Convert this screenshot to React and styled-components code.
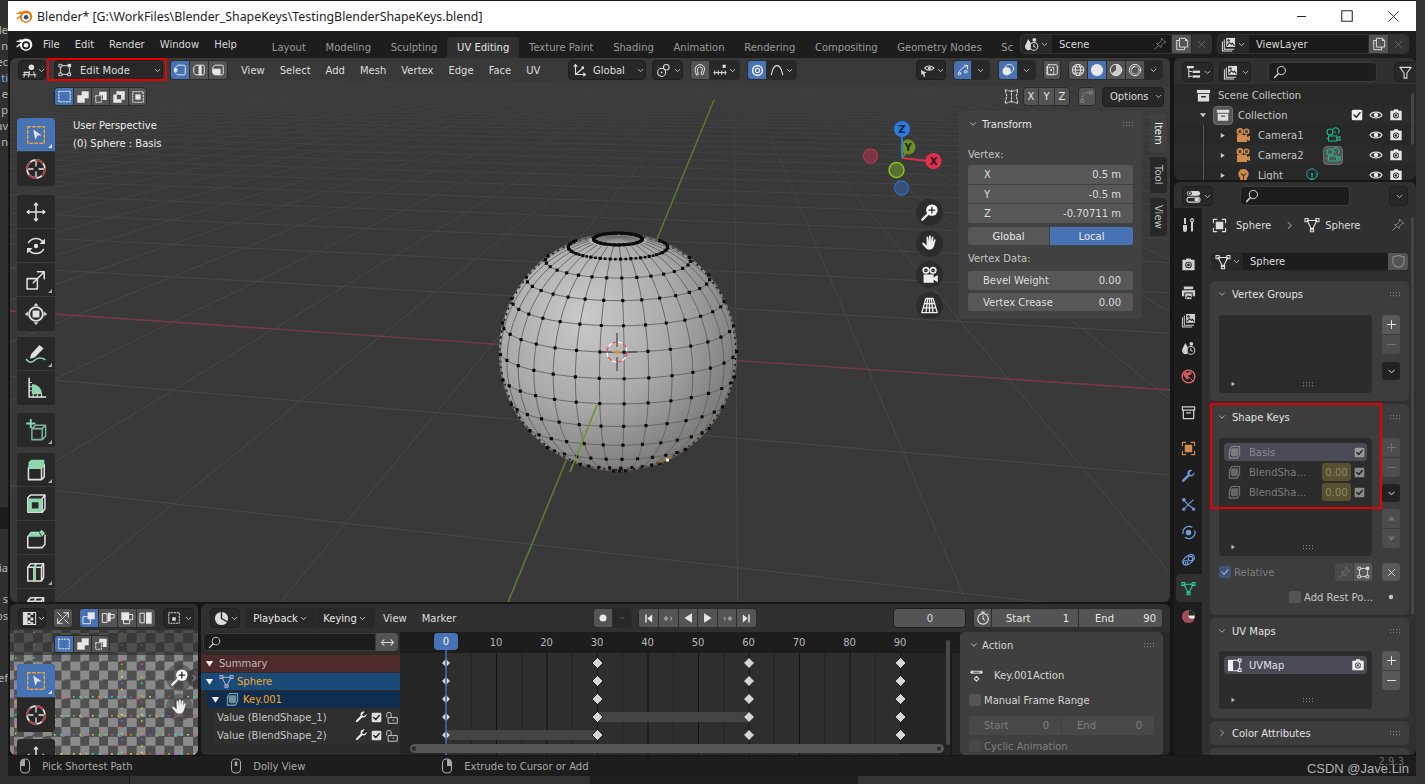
import React from 'react';
import styled, { createGlobalStyle } from 'styled-components';

const Global = createGlobalStyle`
  html, body { margin: 0; padding: 0; background: #2e2e2e; overflow: hidden; }
  * { box-sizing: border-box; }
`;

const UI = '"DejaVu Sans", "Liberation Sans", sans-serif';
const BLUE = '#4772b3';
const ORANGE = '#d28a4c';
const TEAL = '#20b596';

/* ---------- icons ---------- */
const Svg = styled.svg`
  width: ${p => p.$s}px;
  height: ${p => p.$hh || p.$s}px;
  flex: none;
  color: ${p => p.$c || 'inherit'};
  fill: none;
  stroke: currentColor;
  stroke-width: ${p => p.$sw || 1.1};
  stroke-linecap: round;
  stroke-linejoin: round;
  .f { fill: currentColor; stroke: none; }
  .m { fill: #8fd6ae; stroke: none; }
  .d { stroke-dasharray: 1.6 1.6; }
`;

const P = {
  chev: <path d="M4 6l4 4 4-4" strokeWidth="1.4" />,
  chevR: <path d="M6 3.5l4.5 4.5L6 12.5" strokeWidth="1.3" />,
  triD: <path className="f" d="M3.5 5h9L8 12z" />,
  triR: <path className="f" d="M5 3.5l7 4.5-7 4.5z" />,
  triU: <path className="f" d="M3 11l5-6.5 5 6.5z" />,
  triDn: <path className="f" d="M3 5l5 6.5L13 5z" />,
  plus: <path d="M8 3v10M3 8h10" strokeWidth="1.3" />,
  minus: <path d="M3 8h10" strokeWidth="1.3" />,
  x: <path d="M3.5 3.5l9 9M12.5 3.5l-9 9" strokeWidth="1.2" />,
  view3d: <g><circle className="f" cx="10" cy="4.5" r="3" /><path d="M1 12.5h14M3.5 9.5L2 15M8 9L7 15M12.5 9.5L14 15M2 10h6" /></g>,
  editmode: <g><path d="M5 3h5.5M3 5v6M13 6v5M5 13h6" /><rect x="1.5" y="1.5" width="3" height="3" /><rect className="f" x="11" y="1" width="4" height="4" /><rect x="1.5" y="11.5" width="3" height="3" /><rect x="11.5" y="11.5" width="3" height="3" /></g>,
  vert: <g><path d="M6 2.5h6.5a1.5 1.5 0 011.5 1.5v8a1.5 1.5 0 01-1.5 1.5H5L2.5 11V6z" /><rect className="f" x="1" y="6" width="4" height="4" /></g>,
  edge: <g><path d="M5 2.5h7.5a1.5 1.5 0 011.5 1.5v8a1.5 1.5 0 01-1.5 1.5H4L2 11V5.5z" /><rect className="f" x="7.5" y="3" width="3.5" height="11" /></g>,
  face: <g><path d="M5 2.5h7.5a1.5 1.5 0 011.5 1.5v8a1.5 1.5 0 01-1.5 1.5H4L2 11V5.5z" /><path className="f" d="M2 6.5h9v7H3.5L2 12z" /></g>,
  setNew: <rect className="d" x="2" y="2.5" width="12" height="11" />,
  setAdd: <g><rect className="f" x="6.5" y="1.5" width="8" height="8" /><rect className="f" x="1.5" y="6" width="8.5" height="8.5" /></g>,
  setSub: <g><path className="f" d="M6 2h8.5v9.5H10V6H6z" /><path className="d" d="M2 6.5h6.5V14H2z" /></g>,
  setXor: <path className="f" fillRule="evenodd" d="M5 1.5h9.5V11H11v3.5H1.5V5H5zM5.5 5.5v5h5v-5z" />,
  setAnd: <g><rect className="d" x="2" y="2" width="12" height="12" /><rect className="f" x="5" y="5" width="6" height="6" /></g>,
  global: <g><path d="M3.5 3v9.5H13M3.5 12.5L10 7" /><path d="M2 4.5L3.5 2.5 5 4.5M11.5 11l2 1.5-2 1.5" /><rect className="f" x="9.5" y="4.5" width="2.5" height="2.5" /></g>,
  pivot: <g><circle cx="6" cy="10" r="4.3" /><circle cx="11" cy="4.5" r="3" /><circle className="f" cx="6" cy="10" r="1" /></g>,
  magnet: <path d="M4 13.5L2.5 9a5.7 5.7 0 017.5-6.8 5 5 0 013 6.4l-1.8 4.9-2-1 1.5-4.3a2.6 2.6 0 00-1.5-3.4 3.2 3.2 0 00-4.2 3.6L6 12.5z" />,
  snapInc: <g><path d="M1 11h14M2 9v4M6 9v4M10 9v4M14 9v4" /><rect className="f" x="11" y="2" width="3.5" height="3.5" /></g>,
  prop: <g><circle cx="8" cy="8" r="6" strokeWidth="2" /><circle cx="8" cy="8" r="2.6" strokeWidth="1.5" /></g>,
  falloff: <path d="M1.5 13.5C3 5 5.5 3 8 3s5 2 6.5 10.5" strokeWidth="1.2" />,
  overlayEye: <g><path d="M5 5.5C7 2.5 12 2.5 15 5.5 12 8.5 7 8.5 5 5.5z" /><circle className="f" cx="10" cy="5.5" r="1.6" /><path className="f" d="M1 7.5l6 2.8-2.4.8 1 3.4-1.5.5-1-3.4-1.6 1z" /></g>,
  gizmoArrow: <g><path d="M2.5 13C4 8 8 4 13 3M9.5 2.5L13.5 3 13 7" /><circle cx="4" cy="12" r="1.5" /><circle cx="11" cy="10" r="1.5" /></g>,
  overlay: <g><circle cx="9.5" cy="6.5" r="5" /><circle className="f" cx="6.5" cy="9.5" r="4.7" /></g>,
  xray: <g><rect x="3" y="2" width="11" height="11" rx="1" /><rect className="d" x="2" y="5" width="8" height="8.5" /><rect className="f" x="6" y="7" width="2" height="2" /></g>,
  wire: <g><circle cx="8" cy="8" r="6.5" /><ellipse cx="8" cy="8" rx="3" ry="6.5" /><path d="M1.5 8h13M2.5 4.5h11M2.5 11.5h11" /></g>,
  solid: <circle className="f" cx="8" cy="8" r="7" />,
  matBall: <g><circle cx="8" cy="8" r="6.5" /><path className="f" d="M8 8V1.5a6.5 6.5 0 016.5 6.5 6.5 6.5 0 01-6.5 6.5A6.5 6.5 0 012.8 12z" opacity=".8" /></g>,
  rendBall: <g><circle cx="8" cy="8" r="6.5" /><circle cx="8" cy="8" r="4.5" opacity=".6" /><path d="M4.5 7a4 4 0 013-3" /></g>,
  mirror: <path className="d" d="M7 3L2 1.5 3.5 7.5 2 14.5 7 13M9 3l5-1.5L12.5 7.5 14 14.5 9 13M8 2v12" />,
  autoProp: <g><path className="d" d="M3 11a6.5 6.5 0 018-8" /><rect x="1.5" y="11" width="3" height="3" /><rect x="11" y="1.5" width="3" height="3" /></g>,
  cursor: <g><circle cx="8" cy="8" r="6" strokeWidth="1.2" /><circle cx="8" cy="8" r="6" strokeWidth="1.2" stroke="#b03a3a" strokeDasharray="4.7 4.7" /><path d="M8 3v3M8 10v3M3 8h3M10 8h3" strokeWidth=".9" /></g>,
  select: <g><rect x="2" y="2" width="12" height="12" stroke="#e8a33d" strokeDasharray="2 1.6" /><path className="f" d="M6 4l6 4.2-2.8.2-1.8 3z" /></g>,
  move: <g><path d="M8 2v12M2 8h12" /><path className="f" d="M8 .8L10 3.2H6zM8 15.2L6 12.8h4zM.8 8L3.2 6v4zM15.2 8L12.8 10V6z" /></g>,
  rotate: <g><path d="M2.5 5.5A6.5 6.5 0 0113.5 5.5M13.5 10.5A6.5 6.5 0 012.5 10.5" /><path className="f" d="M14.5 2.5v4h-4zM1.5 13.5v-4h4z" /><circle className="f" cx="8" cy="8" r="1.6" /></g>,
  scale: <g><rect x="1.5" y="7" width="7.5" height="7.5" /><path d="M6 10l7.5-7.5M9 2h5v5" /></g>,
  transform: <g><circle cx="8" cy="8" r="5" strokeWidth="1.4" /><rect className="f" x="5.5" y="5.5" width="5" height="5" /><path className="f" d="M8 0l1.8 2H6.2zM8 16l-1.8-2h3.6zM0 8l2-1.8v3.6zM16 8l-2 1.8V6.2z" /></g>,
  annotate: <g><path d="M10.5 1.5l3 2.5-6.5 6.5-3.5 1 1-3.5z" className="f" /><path d="M1 12c2 3 4.5 2 6 .5s4-2.5 7.5-.5" stroke="#8fd6ae" strokeWidth="1.1" /></g>,
  measure: <g><path d="M3 1v13.5h12" /><path d="M3 4h1.5M3 7h1.5M3 10h1.5M6 14.5V13M9 14.5V13M12 14.5V13" strokeWidth=".8" /><path className="m" d="M5 12.5V5a7.5 7.5 0 017.5 7.5z" /></g>,
  addCube: <g><path className="m" d="M3.5 0h1.4v2.6h2.6v1.4H4.9v2.6H3.5V4H.9V2.6h2.6z" /><path d="M5 7l2.5-2.5h7.5v8L12.5 15H5zM5 7h7.5v8M12.5 7L15 4.5" stroke="#7cb497" /></g>,
  extrude: <g><path d="M2.5 6.5l2-2.5H14v9l-2 2H2.5zM12 6.5V15M12 6.5L14 4" /><path className="m" d="M2.5 2.5l2-2H14v4.5L12 7.3H2.5z" /></g>,
  inset: <g><path d="M2 3.5l2-2h10.5v10l-2 2.5H2z M12.5 4v10M12.5 4l2-2.5" /><path className="m" d="M2 4h10.5v10H2zM5 6.7v4.6h4.8V6.7z" fillRule="evenodd" /></g>,
  bevel: <g><path d="M2 7l2.5-3H10M2 7v8h10.5l2-2.5V6" /><path className="m" d="M2 7l2.5-3H10l2 3zM10.5 3.5l1.7-1.5 2.3 2.3L12.5 7z" /></g>,
  loopcut: <g><path d="M2 4.5l2-2.5H13.5v10L12 14.5H2z M6.5 4.5L8.5 2M12 4.5L13.5 2M2 4.5H12v10M6.5 4.5v10" /><path d="M7.3 3.5v11" stroke="#8fd6ae" strokeWidth="1.4" /></g>,
  zoomPlus: <g><circle cx="10" cy="6" r="4.8" fill="#fff" stroke="none" /><path d="M10 3.6v4.8M7.6 6h4.8" stroke="#222" /><path d="M6.5 9.5L2 14" strokeWidth="2" /></g>,
  hand: <path className="f" d="M5.5 2.8c0-1 1.4-1 1.5 0l.3 3.7.3-4.7c.1-1 1.5-1 1.5 0l.1 4.7.6-3.8c.2-1 1.5-.8 1.5.2l-.4 4.2.9-2.2c.4-.9 1.6-.5 1.3.5l-1.3 4.8c-.5 2-1.9 3-3.8 3-1.7 0-2.8-.7-3.7-2.1L2 8.6c-.6-.9.5-1.7 1.3-1l2.3 2z" />,
  camNav: <g><circle className="f" cx="5" cy="4.5" r="3" /><circle className="f" cx="11" cy="4.5" r="3" /><path className="f" d="M3 8h8.5v2.5L15 8.5v6l-3.5-2V15H3z" /><circle cx="5" cy="4.5" r="1" stroke="#222" /><circle cx="11" cy="4.5" r="1" stroke="#222" /></g>,
  gridNav: <path d="M5 2h6l3.5 12h-13zM8 2v12M3.6 6.5h8.8M2.5 10h11M6.5 2L5 14M9.5 2L11 14" />,
  tree: <g><path d="M3 2h5M3 2v11M3 7h3M3 12h3" /><rect className="f" x="1" y="1" width="7" height="2.5" /><rect className="f" x="7" y="6" width="8" height="2.5" /><rect className="f" x="7" y="11" width="8" height="2.5" /></g>,
  layers: <g><path d="M1.5 5v10h10M3.5 3v10h10" /><rect className="f" x="5.5" y="1" width="9.5" height="9.5" /><path d="M6.5 9l2.5-3 2 2 1-1.5 2 2.5" stroke="#222" /><circle cx="8" cy="3.8" r=".8" stroke="#222" /></g>,
  uvEditor: <g><rect x="1.5" y="1.5" width="13" height="13" /><path className="f" d="M1.5 1.5H6v13H1.5z" /><path className="f" d="M6 4h3v3H6zM9 7h3v3H9zM6 10h3v3H6zM9 1.5h3V4H9zM9 12h3v2.5H9z" /></g>,
  search: <g><circle cx="9.7" cy="6.3" r="4.7" /><path d="M6.3 9.7L1.8 14.2" strokeWidth="1.6" /></g>,
  filter: <path d="M2 2.5h12L9.5 8.5v5.5h-3V8.5z" strokeWidth="1.2" />,
  box: <g><rect className="f" x="1" y="2" width="14" height="3.5" /><path className="f" fillRule="evenodd" d="M2 6.5h12v8H2zM5.5 8.5V10h5V8.5z" /></g>,
  camOb: <g><circle className="f" cx="5" cy="4.5" r="3.5" /><circle className="f" cx="11.5" cy="4.5" r="3" /><path className="f" d="M2 8h10v2l3-1v5l-3-1v2H2z" /><circle cx="5" cy="4.5" r="1" stroke="#333" /><circle cx="11.5" cy="4.5" r="1" stroke="#333" /></g>,
  camData: <g><circle cx="5" cy="5" r="3" /><path d="M7.5 4a3.3 3.3 0 116 2" /><rect x="3.5" y="9" width="8.5" height="5" /><path d="M12 11l3-1.5v4L12 12.5M2 11.5h1.5" /><circle className="f" cx="10" cy="5" r=".8" /></g>,
  lightOb: <g><path className="f" d="M8 1a5.5 5.5 0 00-3.5 9.7V13h7v-2.3A5.5 5.5 0 008 1z" /><path className="f" d="M5.5 14h5v1.5h-5z" /><path d="M5.5 6L7 7.5M10.5 6L9 7.5M8 7.5V13" stroke="#333" /></g>,
  lightData: <g><circle cx="8" cy="7" r="6" /><path d="M8 8.5V13M6.5 13.5h3" /><circle className="f" cx="8" cy="7" r="1.2" /></g>,
  eye: <g><path d="M1 8c3-4.5 11-4.5 14 0-3 4.5-11 4.5-14 0z" strokeWidth="1.3" /><circle className="f" cx="8" cy="8" r="2.6" /></g>,
  render: <g><path className="f" fillRule="evenodd" d="M5 3l1-1.5h4L11 3h3.5v11h-13V3zM8 5a3.5 3.5 0 100 7 3.5 3.5 0 000-7z" /><circle cx="8" cy="8.5" r="2" /></g>,
  check: <g><rect className="f" x="1" y="1" width="14" height="14" rx="2" /><path d="M4 8l3 3 5-6" stroke="#222" strokeWidth="2" /></g>,
  checkMark: <path d="M3 8l3.5 3.5L13 4.5" strokeWidth="2.2" />,
  toggles: <g><rect className="f" x="1" y="2" width="14" height="5.3" rx="2.6" /><rect x="1" y="8.7" width="14" height="5.3" rx="2.6" /><rect className="f" x="9" y="9.7" width="5" height="3.3" rx="1.6" /><circle cx="4" cy="4.7" r="1.7" stroke="#222" /></g>,
  tools: <g><path className="f" d="M3 8h4v5a2 2 0 01-4 0zM4 1h2v6H4z" /><path d="M12 1.5c-2 1-2 3 0 3.5 2-.5 2-2.5 0-3.5z" strokeWidth="1.2" /><path className="f" d="M11 5h2v9.5h-2z" /></g>,
  printer: <g><path className="f" d="M3 1.5h10v3H3zM1 5.5h14V12h-2.5V8h-9v4H1z" /><path className="f" d="M4.5 9h7v6h-7z" /><path d="M5.5 14l2-2.5L9 13l1-1 1 2" stroke="#222" /></g>,
  scene: <g><path className="f" d="M4.5 2L1 9.5C1 12.5 3 14 5 14c1 0 1.5-.5 2-1V6z" /><circle cx="10.5" cy="10" r="4.2" /><path d="M10.5 8v2l1.5 1" /><circle className="f" cx="11" cy="3" r="2" /></g>,
  world: <g><circle cx="8" cy="8" r="6.8" stroke="#e06b6b" strokeWidth="1.4" /><path d="M3 3.5L13 13" stroke="#e06b6b" strokeWidth="1" /><path d="M4.5 2.8l3 1.5 1-1.8L12 4 10 6.500l-3 .5 1.5 3-2 1.500-4-4.500z" stroke="none" fill="#d05a5a" /></g>,
  boxLine: <g><path d="M1.5 2h13v3.5h-13zM2.5 5.5v9h11v-9M6 8.5h4" strokeWidth="1.3" /></g>,
  object: <g><path d="M1.5 5V1.5H5M11 1.5h3.5V5M14.5 11v3.5H11M5 14.5H1.5V11" strokeWidth="1.2" /><rect className="f" x="4" y="4" width="8" height="8" /></g>,
  wrench: <path className="f" d="M14.5 3.5l-3 3-2-.5-.5-2 3-3C9.5.2 7 1.5 6.8 4c0 .7 0 1.2.3 1.8L1.5 11.4c-1.3 1.3.6 3.2 1.9 1.9l5.6-5.6c2.6 1 5.6-.7 5.500-4.200z" />,
  particles: <g><path d="M3 3l4.5 5.5M3 13l4.5-4.5M14 13L8 8.500M7.500 8.500L13 3" strokeWidth="1.2" /><circle className="f" cx="3" cy="3" r="2" /><circle className="f" cx="3" cy="13" r="1.7" /><circle className="f" cx="13.5" cy="13" r="1.7" /></g>,
  physics: <g><circle cx="8.5" cy="8" r="6.5" strokeWidth="1.4" strokeDasharray="14 5" /><circle className="f" cx="8" cy="8" r="3" /></g>,
  constraint: <g><path d="M2.5 11.5C1 9.5 2.5 6 5.5 4S12 1 13.5 3s0 5-3 7.5-6.5 3-8 1z" strokeWidth="1.3" /><circle cx="5" cy="10.5" r="2.4" /><circle className="f" cx="5" cy="10.5" r="1" /><circle cx="10" cy="6" r="2.4" /></g>,
  mesh: <g><path d="M3 3.5h10M3 3.5L8 13M13 3.5L8 13" /><rect x="1" y="1.5" width="3.2" height="3.2" /><rect x="11.8" y="1.5" width="3.2" height="3.2" /><rect x="6.4" y="11.5" width="3.2" height="3.2" /></g>,
  material: <g><circle cx="8" cy="8" r="7" fill="#a24c55" stroke="none" /><path d="M8 8c1 3 5 3 6.5 1A7 7 0 008 1z" fill="#ececec" stroke="none" /><path d="M8 1a7 7 0 016.9 6H8z" fill="#24242a" stroke="none" /></g>,
  pin: <g><path d="M10 1.5L14.5 6l-2 .5-3 3-.2 2.5L4 7.5l2.500-.2 3-3z" /><path d="M6 10l-4 4" /></g>,
  shield: <path d="M8 1.5l6 1.8v4.2c0 3.5-2.5 6-6 7-3.500-1-6-3.500-6-7V3.300z" strokeWidth="1.1" />,
  copy: <g><path d="M2 4h3M2 4v10.500h9V12" /><path d="M5.500 1.500H12L14.500 4v7.500h-9z" /><path className="f" d="M11.500 1.500v3h3z" /></g>,
  shapeKey: <g><path d="M5 1.500h8.500v8L11 14H2.500V6z" /><path className="f" d="M5.500 3.500H12V10l-1.500 2h-5L4 10.500v-5z" opacity=".8" /></g>,
  uvmap: <g><path className="f" d="M1 2h5.500v12H1z" /><path d="M6.500 2.500h6M13.500 4.500v7M7 13.500h5" /><rect x="12" y="1" width="3" height="3" /><rect x="12" y="11.5" width="3" height="3" /></g>,
  clock: <g><path className="f" d="M6 .5h4V2H6z" /><circle cx="8" cy="9" r="6" strokeWidth="1.3" /><path d="M8 9V5.500M8 9l2 1.500M13 3l1 1" /></g>,
  ballTime: <g><circle className="f" cx="8" cy="8" r="7" /><path d="M8 8V1.500M8 8l5.500 3" stroke="#2a2a2a" strokeWidth="1.5" /></g>,
  sync: <g><path d="M2 14L14 2M9 2h5v5M7 14H2V9" /><path d="M6 6L2 2M10 10l4 4" /></g>,
  uvSel1: <g><rect x="1.5" y="6.5" width="8" height="8" /><rect x="6.5" y="1.5" width="8" height="8" className="f" /></g>,
  uvSel2: <g><path d="M2 3h5v10H2z" /><path className="f" d="M8 2h3v10H8z" /><path d="M11 4h4v4h-4" /></g>,
  uvSel3: <g><rect className="f" x="1.5" y="1.5" width="9" height="9" /><path d="M10.500 4h4v6h-4M4 10.500v4h7V11" /></g>,
  uvSel4: <g><rect x="1.5" y="2.5" width="4.5" height="11" /><rect className="f" x="8" y="1.5" width="6.5" height="13" /></g>,
  snapCube: <g><rect className="d" x="2" y="2" width="12" height="12" /><path className="f" d="M6 7h4v4H6z" /></g>,
  action: <g><path className="f" d="M1 4.500l2-2 2 2-2 2zM11 4.500l2-2 2 2-2 2z" /><path d="M4 3.500h8v2H4" strokeWidth="1" /><path d="M8 9l2.500 2.500L8 14l-2.500-2.500z" /></g>,
  mouseL: <g><rect x="3.5" y="1" width="9" height="14" rx="4" /><path className="f" d="M8 1.200a3.800 3.800 0 00-4.200 4V8H8z" /></g>,
  mouseM: <g><rect x="3.5" y="1" width="9" height="14" rx="4" /><path className="f" d="M6.700 3.500h2.600V8H6.700z" /></g>,
  mouseR: <g><rect x="3.5" y="1" width="9" height="14" rx="4" /><path className="f" d="M8 1.200a3.800 3.800 0 014.200 4V8H8z" /></g>,
  swap: <path d="M1.500 8h13M4.500 5l-3 3 3 3M11.500 5l3 3-3 3" />,
  tRec: <circle className="f" cx="8" cy="8" r="4" />,
  tStart: <path className="f" d="M4 3h1.800v10H4zM6.500 8l6-5v10z" />,
  tPrevK: <path className="f" d="M5 4.500L8 8l-3 3.500L2 8zM10.500 4.500L13 8l-2.500 3.500V8z" />,
  tBack: <path className="f" d="M12.500 2.500v11L4 8z" />,
  tPlay: <path className="f" d="M3.500 2.500v11L12 8z" />,
  tNextK: <path className="f" d="M5.500 4.500L3 8l2.500 3.500V8zM11 4.500L14 8l-3 3.500L8 8z" />,
  tEnd: <path className="f" d="M12 3h-1.800v10H12zM9.500 8l-6-5v10z" />,
  lock: <g><path d="M2 7V4a2.500 2.500 0 015 0v3" /><rect x="4" y="7.5" width="10" height="6.5" /><path d="M9 10.500h1" /></g>,
};

const Icon = ({ n, s = 14, c, sw }) => (
  <Svg viewBox="0 0 16 16" $s={s} $c={c} $sw={sw}>{P[n]}</Svg>
);

const Dots = () => (
  <Svg viewBox="0 0 12 6" $s={12} $hh={6} $c="#8e8e8e">
    {[1, 4, 7, 10].map(x => [1.2, 4.2].map(y => <rect key={x + '-' + y} className="f" x={x} y={y} width="1" height="1" />))}
  </Svg>
);

const Logo = ({ body = '#f0f0f0', dot = '#f0f0f0', s = 16 }) => (
  <svg width={s} height={s} viewBox="0 0 16 16">
    <path fill={body} fillRule="evenodd" d="M1 5.700h4.300L.6 9.600c-.6.5 0 1.500.8 1l2.300-1.800c.1 3 2.700 5.200 5.700 5.200a6 6 0 006-5.700 5.900 5.900 0 00-6-6c-1.100 0-2.200.3-3 .9H3.700c-1.100 0-1 1.100 0 1.100h1L1 4.500c-.9 0-.9 1.200 0 1.200zM9.500 5a3.800 3.800 0 110 7.600 3.800 3.800 0 010-7.600z" />
    <circle cx="9.5" cy="8.7" r="2.2" fill={dot} />
  </svg>
);

/* ---------- page frame ---------- */
const Page = styled.div`
  width: 1425px; height: 784px; overflow: hidden;
  display: grid; grid-template-columns: 8px 1408px 9px;
  font-family: ${UI}; font-size: 10px; color: #d4d4d4;
`;
const SideStrip = styled.div`
  background: ${p => p.$bg}; overflow: hidden;
  display: flex; flex-direction: column;
`;
const StripText = styled.div`
  height: ${p => p.$h || 16}px; flex: none; display: flex; justify-content: flex-end; align-items: center;
  font: 11px "Noto Sans", sans-serif; color: ${p => p.$c || '#b5b5b5'}; white-space: nowrap;
  background: ${p => p.$bg || 'transparent'};
`;
const Window = styled.div`display: flex; flex-direction: column; height: 784px; background: #161616;`;
const TitleBar = styled.div`
  margin-top: 1px; height: 30px; flex: none; background: #fff; color: #1c1c1c;
  display: flex; align-items: center; padding-left: 8px;
  font: 12.37px "Noto Sans", "Noto Sans CJK SC", sans-serif;
`;
const TitleText = styled.span`margin-left: 4px; flex: 1; white-space: nowrap;`;
const WinBtn = styled.div`width: 46px; display: flex; justify-content: center;`;

const TopBar = styled.div`height: 27px; flex: none; background: #1d1d1d; display: flex; align-items: flex-start; padding: 0 7px 0 8px;`;
const LogoCell = styled.div`width: 26px; height: 26px; display: flex; align-items: center;`;
const TopMenu = styled.div`display: flex; gap: 15px; height: 26px; align-items: center; margin-left: 1px; width: 219px; flex: none; color: #d8d8d8;`;
const Tabs = styled.div`display: flex; flex: 1; overflow: hidden; height: 27px;`;
const Tab = styled.div`
  margin-top: 6px; height: 21px; padding: 0 9.85px; display: flex; align-items: center;
  white-space: nowrap; color: ${p => p.$on ? '#e4e4e4' : '#9a9a9a'};
  background: ${p => p.$on ? '#303030' : 'transparent'}; border-radius: 4px 4px 0 0;
`;
const IdBlock = styled.div`
  margin-top: 3px; margin-left: ${p => p.$ml || 0}px; width: ${p => p.$w}px; height: 20px; flex: none;
  display: flex; align-items: stretch; background: #1a1a1a; border: 1px solid #333; border-radius: 4px; overflow: hidden;
`;
const IdIcon = styled.div`width: ${p => p.$w}px; background: #282828; display: flex; align-items: center; justify-content: center; gap: 1px; flex: none;`;
const IdName = styled.div`flex: 1; padding-left: 7px; display: flex; align-items: center; justify-content: space-between; padding-right: 4px; color: #d8d8d8;`;
const IdBtn = styled.div`width: 20px; flex: none; background: ${p => p.$dim ? '#333' : '#545454'}; display: flex; align-items: center; justify-content: center; color: ${p => p.$dim ? '#707070' : '#ddd'}; border-left: 1px solid #2a2a2a;`;

const Main = styled.div`
  height: 698px; flex: none; display: grid; grid-template-columns: 1160px 242px; column-gap: 4px; padding-left: 2px;
`;
const LeftCol = styled.div`display: grid; grid-template-rows: 544px 151px; row-gap: 2px;`;
const RightCol = styled.div`display: grid; grid-template-rows: 122px 573px; row-gap: 2px;`;

/* ---------- shared controls ---------- */
const Row = styled.div`
  display: flex; align-items: center; height: ${p => p.$h || 20}px; flex: none;
  margin-top: ${p => p.$mt || 0}px; padding: 0 ${p => p.$pr || 0}px 0 ${p => p.$pl || 0}px;
`;
const Drop = styled.div`
  width: ${p => p.$w}px; height: 20px; flex: none; margin-left: ${p => p.$ml || 0}px;
  background: ${p => p.$bg || '#282828'}; border: 1px solid #1e1e1e; border-radius: 4px;
  display: flex; align-items: center; justify-content: ${p => p.$j || 'space-between'}; padding: 0 0 0 ${p => p.$pl || 3}px;
  color: #dcdcdc; white-space: nowrap;
`;
const DropLabel = styled.span`flex: 1; margin-left: ${p => p.$ml}px;`;
const Seg = styled.div`
  display: flex; flex: none; height: ${p => p.$h || 20}px; margin-left: ${p => p.$ml || 0}px; border-radius: 4px; overflow: hidden; gap: 1px;
  background: #2e2e2e; border: 1px solid #2b2b2b;
`;
const SegBtn = styled.div`
  width: ${p => p.$w}px; display: flex; align-items: center; justify-content: center; gap: 1px;
  background: ${p => p.$on ? BLUE : p.$dark ? '#282828' : '#545454'}; color: #e8e8e8; flex: none;
`;
const Split = styled(SegBtn)`justify-content: space-between; padding: 0 ${p => p.$pr}px 0 ${p => p.$pl}px;`;
const Menus = styled.div`display: flex; gap: 15px; width: ${p => p.$w}px; margin-left: ${p => p.$ml}px; flex: none; color: #dcdcdc;`;
const Push = styled.div`flex: 1;`;

/* ---------- viewport ---------- */
const Viewport = styled.section`position: relative; background: #393939; border-radius: 6px; overflow: hidden; display: flex; flex-direction: column;`;
const Scene3D = styled.svg`position: absolute; inset: 0; width: 100%; height: 100%;`;
const HeaderLayer = styled.div`position: relative; display: flex; flex-direction: column; padding-top: 2px;`;
const VBody = styled.div`position: relative; flex: 1; min-height: 0; display: flex; align-items: flex-start; margin-top: 5px; padding: 0 3px 0 7px; overflow: hidden;`;
const ToolBar = styled.div`position: relative; display: flex; flex-direction: column; padding-top: ${p => p.$top ?? 7}px; width: 38px; flex: none;`;
const ToolGroup = styled.div`display: flex; flex-direction: column; background: #282828; border-radius: 4px; overflow: hidden; margin-bottom: ${p => p.$mb}px; flex: none;`;
const Tool = styled.div`
  height: 34px; flex: none; display: flex; align-items: center; justify-content: center; position: relative;
  background: ${p => p.$on ? BLUE : '#282828'}; color: #e0e0e0; border-bottom: 1px solid #3a3a3a;
  &:last-child { border-bottom: 0; }
`;
const Corner = styled.i`
  position: absolute; right: 3px; bottom: 3px; width: 0; height: 0;
  border-left: 4px solid transparent; border-bottom: 4px solid ${p => p.$c || '#bbb'};
`;
const Info = styled.div`margin-left: 18px; padding-top: 6px; color: #ececec; line-height: 18px; white-space: nowrap;`;
const NavCol = styled.div`margin-left: auto; margin-top: 88px; display: flex; flex-direction: column; gap: 4px; flex: none;`;
const NavBtn = styled.div`
  width: 27px; height: 27px; border-radius: 50%; background: #2c2c2c; display: flex; align-items: center; justify-content: center; color: #eee;
`;
const NPanel = styled.div`
  margin-left: 16px; width: 183px; flex: none; background: #414141; border-radius: 5px; padding: 0 9px 8px; color: #d6d6d6; display: flex; flex-direction: column;
`;
const PanelHead = styled.div`
  height: 26px; flex: none; display: flex; align-items: center; gap: 4px; color: #e6e6e6;
`;
const Lbl = styled.div`height: 16px; flex: none; margin-top: ${p => p.$mt || 0}px; display: flex; align-items: center; color: #c4c4c4;`;
const FieldStack = styled.div`display: flex; flex-direction: column; gap: ${p => p.$gap ?? 1}px; margin-top: ${p => p.$mt || 0}px; flex: none;`;
const Field = styled.div`
  height: ${p => p.$h || 18.7}px; background: #575757; display: flex; justify-content: space-between; align-items: center; padding: 0 12px 0 ${p => p.$pl || 15}px;
  color: #dedede; border-radius: ${p => p.$r || 0}px; flex: none;
  &:first-child { border-top-left-radius: 3px; border-top-right-radius: 3px; }
  &:last-child { border-bottom-left-radius: 3px; border-bottom-right-radius: 3px; }
`;
const Toggle2 = styled.div`display: grid; grid-template-columns: 81px 1fr; gap: 1px; height: 18px; margin-top: 4px; flex: none; border-radius: 3px; overflow: hidden;`;
const ToggleCell = styled.div`display: flex; align-items: center; justify-content: center; background: ${p => p.$on ? BLUE : '#575757'}; color: #e8e8e8;`;
const SideTabs = styled.div`margin-left: 8px; margin-top: 3px; display: flex; flex-direction: column; gap: 5px; flex: none;`;
const SideTab = styled.div`
  width: 17px; height: ${p => p.$h}px; background: ${p => p.$on ? '#414141' : '#282828'}; border-radius: 0 4px 4px 0;
  display: flex; align-items: center; justify-content: center; color: ${p => p.$on ? '#eee' : '#bdbdbd'};
  writing-mode: vertical-rl; white-space: nowrap;
`;

/* ---------- bottom editors ---------- */
const BottomRow = styled.div`display: grid; grid-template-columns: 188px 969px; column-gap: 3px; min-height: 0;`;
const Editor = styled.section`position: relative; background: ${p => p.$bg || '#303030'}; border-radius: 6px; overflow: hidden; display: flex; flex-direction: column; min-height: 0;`;
const EditorHead = styled.div`height: ${p => p.$h}px; flex: none; background: #303030; display: flex; align-items: center; padding: 2px 0 ${p => p.$h - 26}px ${p => p.$pl}px; position: relative;`;
const Checker = styled.div`
  position: relative; flex: 1; min-height: 0; overflow: hidden;
  background-color: #505050;
  background-image: conic-gradient(#8a8a8a 25%, #505050 0 50%, #8a8a8a 0 75%, #505050 0);
  background-size: 18.8px 18.8px; background-position: 4px 3px;
  display: flex; align-items: flex-start; padding-left: 7px;
`;
const UVDots = styled.svg`position: absolute; inset: 0; width: 100%; height: 100%;`;
const UVBand = styled.div`position: absolute; left: 0; right: 0; top: 0; height: 25px; background: rgba(44,44,44,.62);`;
const UVSeg = styled(Seg)`position: absolute; left: 44px; top: 5px; height: 18px;`;
const UVNav = styled.div`position: relative; margin-left: 111px; margin-top: 34px; display: flex; flex-direction: column; gap: 3px;`;
const UVNavBtn = styled(NavBtn)`background: rgba(70,70,70,.55);`;
const UVArrow = styled.div`position: absolute; right: -3px; top: 38px; width: 14px; height: 20px; background: rgba(60,60,60,.8); border-radius: 10px 0 0 10px; color: #bbb; display: flex; align-items: center; justify-content: center;`;

const SheetBody = styled.div`flex: 1; min-height: 0; display: flex;`;
const Channels = styled.div`width: 199px; flex: none; background: #2c2c2c; display: flex; flex-direction: column; padding-top: 1px;`;
const ChSearch = styled.div`display: flex; height: 18px; margin: 0 2px 4px; flex: none;`;
const ChInput = styled.div`flex: 1; background: #1d1d1d; border: 1px solid #3a3a3a; border-radius: 4px 0 0 4px; display: flex; align-items: center; padding-left: 4px; color: #cfcfcf;`;
const ChSwap = styled.div`width: 22px; background: #545454; border-radius: 0 4px 4px 0; display: flex; align-items: center; justify-content: center; color: #ddd;`;
const ChRow = styled.div`
  height: 17px; margin-bottom: 1px; flex: none; margin-left: ${p => p.$ml || 0}px; background: ${p => p.$bg}; color: ${p => p.$c || '#cdcdcd'};
  display: flex; align-items: center; gap: 3px; padding-left: ${p => p.$pl || 3}px; white-space: nowrap; padding-right: 1px;
`;
const ChDim = styled.span`color: #bbb;`;
const ChSpacer = styled.span`flex: 1;`;
const Timeline = styled.svg`width: 560px; height: 123px; flex: none; display: block;`;
const ActionPanel = styled.div`
  width: 203px; height: 123px; flex: none; background: #3f3f3f; border-radius: 5px; padding: 0 9px; overflow: hidden; color: #d4d4d4; display: flex; flex-direction: column;
`;
const ActionWrap = styled.div`flex: 1; background: #282828; display: flex;`;
const ActionRow = styled.div`display: flex; align-items: center; gap: ${p => p.$gap || 3}px; height: ${p => p.$h}px; margin-top: ${p => p.$mt || 0}px; flex: none; color: ${p => p.$c || '#d4d4d4'};`;
const Box = styled.span`
  width: 12px; height: 12px; flex: none; border-radius: 2px; background: ${p => p.$bg || '#545454'}; display: inline-flex; align-items: center; justify-content: center; color: #ddd;
`;
const RangeGrp = styled.div`height: 19px; margin-top: 8px; width: 185px; flex: none; display: grid; grid-template-columns: 92px 1fr; gap: 1px; border-radius: 3px; overflow: hidden; color: #7e7e7e;`;
const RangeCell = styled.div`background: #484848; display: flex; justify-content: space-between; align-items: center; padding: 0 12px 0 15px;`;

/* ---------- outliner ---------- */
const Outliner = styled.section`position: relative; background: #282828; border-radius: 6px; overflow: hidden; display: flex; flex-direction: column;`;
const OutHead = styled.div`height: 26px; flex: none; background: #303030; display: flex; align-items: center; padding: 2px 0 0 8px;`;
const SearchBox = styled.div`
  width: ${p => p.$w}px; height: 20px; margin-left: ${p => p.$ml}px; flex: none; background: #1d1d1d; border: 1px solid #3a3a3a; border-radius: 4px; display: flex; align-items: center; padding-left: 4px; color: #ddd;
`;
const OutRows = styled.div`padding-top: 1px; display: flex; flex-direction: column;`;
const OutRow = styled.div`
  height: 20px; flex: none; display: flex; align-items: center; position: relative; padding-left: ${p => p.$pl}px; padding-right: 13px; color: ${p => p.$c || '#c4c4c4'};
  background: ${p => p.$alt ? '#2b2b2b' : 'transparent'};
`;
const Tri = styled.span`width: 15px; flex: none; display: flex; color: #c8c8c8;`;
const IconPad = styled.span`
  width: 20px; height: 19px; flex: none; display: flex; align-items: center; justify-content: center; border-radius: 4px;
  background: ${p => p.$on ? '#555' : 'transparent'}; border: ${p => p.$on ? '1px solid #6d6d6d' : '0'};
`;
const OutName = styled.span`width: ${p => p.$w}px; flex: none; margin-left: 5px; white-space: nowrap;`;
const OutCols = styled.span`margin-left: auto; display: flex; gap: 6px; align-items: center; color: #e6e6e6;`;
const TreeLine = styled.i`position: absolute; left: 29px; top: 0; bottom: 0; width: 1px; background: #555;`;
const ScrollThumb = styled.i`position: absolute; right: 2px; top: ${p => p.$t}px; height: ${p => p.$h}px; width: 3px; border-radius: 2px; background: #444;`;

/* ---------- properties ---------- */
const Props = styled.section`position: relative; background: #303030; border-radius: 6px; overflow: hidden; display: flex; flex-direction: column;`;
const PropHead = styled.div`height: 26px; flex: none; display: flex; align-items: center; padding: 2px 8px 0 8px;`;
const PropBody = styled.div`flex: 1; min-height: 0; display: flex;`;
const PropTabs = styled.nav`width: 28px; flex: none; background: #1d1d1d; display: flex; flex-direction: column; padding-top: 3px;`;
const PropTab = styled.div`
  height: 28px; flex: none; display: flex; align-items: center; justify-content: center; margin-left: 2px; border-radius: 4px 0 0 4px; padding-right: 2px;
  margin-top: ${p => p.$mt || 0}px; background: ${p => p.$on ? '#303030' : 'transparent'}; color: ${p => p.$c || '#d0d0d0'};
`;
const PropMain = styled.div`flex: 1; min-width: 0; padding: 0 7px 0 8px; display: flex; flex-direction: column; overflow: hidden;`;
const Crumbs = styled.div`height: 32px; flex: none; margin-top: 1px; display: flex; align-items: center; padding: 0 4px 0 2px; color: #dedede;`;
const CrumbText = styled.span`margin-left: ${p => p.$ml || 7}px; display: flex; align-items: center;`;
const DataRow = styled.div`height: 19px; margin-top: 11px; flex: none; display: flex; border-radius: 4px; overflow: hidden; border: 1px solid #2a2a2a; margin-left: 1px;`;
const DataIcon = styled.div`width: 31px; background: #282828; display: flex; align-items: center; justify-content: center; gap: 1px; color: #ddd; flex: none;`;
const DataName = styled.div`flex: 1; background: #1d1d1d; padding-left: 7px; display: flex; align-items: center; color: #dcdcdc;`;
const DataShield = styled.div`width: 20px; background: #545454; display: flex; align-items: center; justify-content: center; color: #8f8f8f; flex: none;`;
const Panel = styled.div`
  position: relative; height: ${p => p.$h}px; flex: none; margin-top: ${p => p.$mt ?? 3}px; background: #3d3d3d; border-radius: 5px; padding: 0 9px; display: flex; flex-direction: column;
`;
const PanelTitle = styled.div`height: ${p => p.$h || 26}px; flex: none; display: flex; align-items: center; color: #e2e2e2; gap: 5px; margin-left: -2px;`;
const PanelDots = styled.span`margin-left: auto; display: flex; margin-right: ${p => p.$mr ?? -1}px;`;
const ListRow = styled.div`display: flex; gap: 10px; align-items: flex-start; margin-top: ${p => p.$mt || 0}px; flex: none;`;
const ListBox = styled.div`
  width: 153px; height: ${p => p.$h}px; flex: none; background: #2c2c2c; border-radius: 4px; padding: 5px 5px 0; position: relative; display: flex; flex-direction: column;
`;
const ListFoot = styled.div`position: absolute; left: 10px; bottom: 5px; width: 85px; display: flex; justify-content: space-between; align-items: center; color: #bcbcbc;`;
const ListItem = styled.div`
  height: 18px; margin-bottom: 2px; flex: none; border-radius: 4px; background: ${p => p.$sel ? '#4a4a54' : 'transparent'}; display: flex; align-items: center; padding: 0 2px 0 3px; gap: 5px; color: ${p => p.$c || '#7a7a7a'};
`;
const ListVal = styled.span`width: 29px; height: 18px; background: #575130; color: #8d8a68; border-radius: 3px; display: flex; align-items: center; justify-content: center; flex: none; margin: 0 -2px 0 auto;`;
const ListName = styled.span`flex: 1; margin-left: 2px; white-space: nowrap; overflow: hidden;`;
const SideBtns = styled.div`display: flex; flex-direction: column; width: 18px; flex: none; gap: ${p => p.$gap ?? 8}px;`;
const SBGroup = styled.div`display: flex; flex-direction: column; gap: 1px; border-radius: 3px; overflow: hidden; flex: none;`;
const SB = styled.div`
  height: ${p => p.$h || 19}px; background: ${p => p.$dark ? '#222' : p.$dim ? '#4d4d4d' : '#585858'}; border-radius: ${p => p.$r || 0}px; display: flex; align-items: center; justify-content: center; color: ${p => p.$dim ? '#727272' : '#e4e4e4'}; flex: none;
`;
const Disabled = styled.div`display: flex; align-items: center; height: 18px; margin-top: ${p => p.$mt}px; flex: none; color: ${p => p.$c || '#7c7c7c'}; gap: 3px;`;
const CheckBtn = styled.span`width: 12px; height: 12px; flex: none; margin-left: ${p => p.$ml || 0}px; background: ${p => p.$bg || '#545454'}; border-radius: 2px; display: inline-flex; align-items: center; justify-content: center; color: #8ca0bf;`;
const PinGrp = styled.div`margin-left: auto; display: flex; gap: 1px; height: 18px; border-radius: 3px; overflow: hidden;`;
const PinCell = styled.span`width: 18px; background: ${p => p.$on ? '#585858' : '#4a4a4a'}; display: flex; align-items: center; justify-content: center; color: ${p => p.$on ? '#ddd' : '#777'};`;
const SingleX = styled.span`width: 18px; height: 18px; margin-left: 7px; background: #585858; border-radius: 3px; display: flex; align-items: center; justify-content: center; color: #e0e0e0; flex: none;`;
const RedBox = styled.div`position: absolute; left: 0; top: -1px; width: 172px; height: 106px; border: 2px solid #e80000; pointer-events: none;`;
const RedMode = styled.div`position: absolute; left: 37px; top: 0; width: 120px; height: 23px; border: 2px solid #e80000; pointer-events: none;`;
const RedDot = styled.i`position: absolute; left: 93px; top: 16px; width: 1px; height: 1px; background: #e80000;`;

/* ---------- status ---------- */
const Status = styled.footer`height: 20px; flex: none; background: #1d1d1d; display: flex; align-items: center; color: #a8a8a8; position: relative;`;
const StatusItem = styled.span`display: flex; align-items: center; width: ${p => p.$w}px; flex: none; margin-left: ${p => p.$ml || 0}px; gap: 6px; white-space: nowrap;`;
const Version = styled.span`position: absolute; right: 12px; top: 0; color: #6c6c6c;`;
const Watermark = styled.div`
  position: absolute; right: 7px; top: 5px; font: 13px "Liberation Sans", sans-serif; color: #b0b0b0; white-space: nowrap;
`;
const Under = styled.div`flex: 1; display: grid; grid-template-columns: 122px 460px 268px 1fr; background: #333;`;
const UnderCell = styled.div`background: ${p => p.$bg}; border-right: 1px solid ${p => p.$line || 'transparent'};`;

/* ---------- computed scene ---------- */
const VPG = [734, 50];
const VPR = [-3830, 50];
const through = (vp, x, y, x2) => vp[1] + (y - vp[1]) * (x2 - vp[0]) / (x - vp[0]);
const gridLines = [];
for (let k = -2; k <= 40; k++) {
  const y = 50 + 1510 / (5 + k);
  if (y < 54) continue;
  gridLines.push(<line key={'h' + k} x1={10} y1={through(VPR, 611, y, 10)} x2={1170} y2={through(VPR, 611, y, 1170)} />);
}
for (let k = -24; k <= 30; k++) {
  const x = 611 + k * 125;
  const t = (602 - VPG[1]) / (352 - VPG[1]);
  gridLines.push(<line key={'v' + k} x1={VPG[0] + (x - VPG[0]) * (95 - 50) / 302} y1={95} x2={VPG[0] + (x - VPG[0]) * t} y2={602} />);
}

const R = 119, CX = 618, CY = 352, TH = 14 * Math.PI / 180;
const proj = (phiD, lamD) => {
  const ph = phiD * Math.PI / 180, la = lamD * Math.PI / 180;
  const x = R * Math.cos(ph) * Math.sin(la);
  const y = R * Math.sin(ph);
  const z = R * Math.cos(ph) * Math.cos(la);
  return { x: CX + x, y: CY - (y * Math.cos(TH) - z * Math.sin(TH)), front: y * Math.sin(TH) + z * Math.cos(TH) > -2 };
};
const LATS = [];
for (let k = -6; k <= 6; k++) LATS.push(1 + 12.86 * k);
const LONS = [];
for (let j = 0; j < 30; j++) LONS.push(3 + j * 12);
const ringPath = phi => {
  let d = '', pen = false;
  for (let l = 0; l <= 360; l += 3) {
    const p = proj(phi, l);
    if (p.front) { d += `${pen ? 'L' : 'M'}${p.x.toFixed(1)} ${p.y.toFixed(1)}`; pen = true; } else pen = false;
  }
  return d;
};
const lonPath = lam => {
  let d = '', pen = false;
  for (let ph = LATS[0]; ph <= LATS[12] + .01; ph += 4) {
    const p = proj(ph, lam);
    if (p.front) { d += `${pen ? 'L' : 'M'}${p.x.toFixed(1)} ${p.y.toFixed(1)}`; pen = true; } else pen = false;
  }
  return d;
};
const SphereMesh = () => {
  const dots = [];
  LATS.forEach((ph, i) => LONS.forEach((l, j) => {
    const p = proj(ph, l);
    if (p.front) dots.push(<rect key={i + '-' + j} x={p.x - 1.6} y={p.y - 1.6} width="3.2" height="3.2" rx=".6" />);
  }));
  const fan = [];
  for (let l = 0; l < 360; l += 6) {
    const a = proj(LATS[12], l), b = proj(90, 0);
    fan.push(<line key={l} x1={a.x} y1={a.y} x2={b.x} y2={b.y} />);
  }
  const ring2 = [];
  for (let l = 3; l < 360; l += 12) {
    const p = proj(LATS[11], l + 6);
    if (p.front) ring2.push(<rect key={l} x={p.x - 1.3} y={p.y - 1.3} width="2.6" height="2.6" />);
  }
  return (
    <g>
      <circle cx={CX} cy={CY} r={R} fill="url(#ballG)" />
      <circle cx={CX} cy={CY} r={R - 1} fill="none" stroke="#151515" strokeWidth="2" strokeDasharray="2.2 3.8" />
      <g stroke="#626262" strokeWidth=".9" fill="none">
        {LATS.map(ph => <path key={ph} d={ringPath(ph)} />)}
        {LONS.map(l => <path key={l} d={lonPath(l)} />)}
      </g>
      <g stroke="#6a6a6a" strokeWidth=".5">{fan}</g>
      <path d={ringPath(LATS[12])} fill="none" stroke="#0d0d0d" strokeWidth="3" />
      <g fill="#0c0c0c">{ring2}{dots}</g>
    </g>
  );
};

const Scene = () => (
  <Scene3D viewBox="10 58 1160 544" preserveAspectRatio="none">
    <defs>
      <linearGradient id="gridG" gradientUnits="userSpaceOnUse" x1="0" y1="80" x2="0" y2="300">
        <stop offset="0" stopColor="#3d3d3d" />
        <stop offset="1" stopColor="#484848" />
      </linearGradient>
      <radialGradient id="ballG" gradientUnits="userSpaceOnUse" cx="585" cy="315" r="165">
        <stop offset="0" stopColor="#cacaca" />
        <stop offset=".55" stopColor="#a9a9a9" />
        <stop offset="1" stopColor="#7d7a78" />
      </radialGradient>
    </defs>
    <g stroke="url(#gridG)" strokeWidth="1">{gridLines}</g>
    <line x1="10" y1="311" x2="1170" y2="390" stroke="#7d3842" strokeWidth="1.3" />
    <line x1="714" y1="100" x2="508" y2="602" stroke="#5c7d2a" strokeWidth="1.4" />
    <SphereMesh />
    <line x1="597" y1="405" x2="570" y2="472" stroke="#6d9433" strokeWidth="1.6" />
    <path d="M658 463L672 457" stroke="#b5731f" strokeWidth="1.2" />
    <rect x="666" y="458.5" width="3" height="3" fill="#fff" />
    <g fill="none">
      <circle cx="617" cy="352" r="10" stroke="#fff" strokeWidth="1.2" />
      <circle cx="617" cy="352" r="10" stroke="#e8353a" strokeWidth="1.2" strokeDasharray="5.2 5.28" />
      <path d="M617 333v14M617 357v14M601 352h11M622 352h15" stroke="#333" />
    </g>
    <circle cx="617" cy="352" r="2" fill="#ef8a1e" />
    <g fontFamily={UI} fontSize="10" fontWeight="700" textAnchor="middle">
      <circle cx="870.5" cy="156" r="7" fill="#7a3644" stroke="#a33a4d" strokeWidth="1.3" />
      <circle cx="901.5" cy="188" r="7" fill="#364f74" stroke="#2f6cb8" strokeWidth="1.3" />
      <line x1="902" y1="158" x2="908" y2="150" stroke="#6a8f22" strokeWidth="1.8" />
      <line x1="902" y1="158" x2="927" y2="161" stroke="#d9304f" strokeWidth="1.8" />
      <circle cx="908" cy="147" r="7.5" fill="#6a8f22" />
      <text x="908" y="151" fill="#1f2a0c">Y</text>
      <line x1="902" y1="158" x2="902" y2="137" stroke="#2a7ddd" strokeWidth="1.8" />
      <circle cx="902" cy="129" r="8" fill="#2a7ddd" />
      <text x="902" y="133" fill="#0c1f3a">Z</text>
      <circle cx="933.5" cy="161" r="8" fill="#e0304f" />
      <text x="933.5" y="165" fill="#3a0c14">X</text>
      <circle cx="896.5" cy="170" r="7.5" fill="#5a6f34" stroke="#86c21a" strokeWidth="1.5" />
    </g>
  </Scene3D>
);

const ToolItem = ({ n, on, s = 22, corner }) => (
  <Tool $on={on}><Icon n={n} s={s} />{corner && <Corner $c={on ? '#ddd' : '#aaa'} />}</Tool>
);

const Field3 = ({ l, v }) => <Field $pl={16}><span>{l}</span><span>{v}</span></Field>;

/* UV dots */
const uvColors = ['#ff3bd0', '#23e6e6', '#ffe83a', '#ff3b3b', '#3df04f', '#7a5cff', '#ff9a1f', '#9cf03d'];
const UVPoints = () => {
  const pts = [];
  let n = 7;
  const rnd = () => { n = (n * 137 + 59) % 1009; return n; };
  [66, 85, 104, 123].forEach((y, ry) => {
    for (let x = 44; x < 188; x += 6.35) pts.push(<rect key={'r' + ry + x} x={x} y={y} width="1.5" height="1.5" fill={uvColors[rnd() % 8]} />);
  });
  [5, 23, 111, 131].forEach((x, cx) => {
    for (let y = 2; y < 125; y += 6.3) pts.push(<rect key={'c' + cx + y} x={x} y={y} width="1.5" height="1.5" fill={uvColors[rnd() % 8]} />);
  });
  return <UVDots viewBox="0 0 188 125">{pts}</UVDots>;
};

/* timeline chart */
const FX = f => 446 + f * 5.05;
const ROWS = [663, 681, 699, 717, 735];
const Diamond = ({ x, y, r = 5.5 }) => <path d={`M${x} ${y - r}L${x + r} ${y}L${x} ${y + r}L${x - r} ${y}z`} fill="#d6d6d6" stroke="#111" strokeWidth=".8" />;
const TimelineChart = () => {
  const lines = [];
  for (let f = -5; f <= 100; f += 5) {
    const major = f % 10 === 0;
    lines.push(<line key={f} x1={FX(f)} x2={FX(f)} y1="653" y2="755" stroke={major ? '#131313' : '#232323'} strokeWidth="1" />);
  }
  return (
    <Timeline viewBox="400 632 560 123">
      <rect x="400" y="632" width="560" height="123" fill="#2e2e2e" />
      <rect x="400" y="653" width="46" height="102" fill="#252525" />
      <rect x="901" y="653" width="59" height="102" fill="#252525" />
      <rect x="400" y="632" width="560" height="21" fill="#1d1d1d" />
      {lines}
      <rect x="599" y="712" width="150" height="10" fill="#444" />
      <rect x="447" y="730" width="150" height="10" fill="#444" />
      <g fontFamily={UI} fontSize="10" fill="#b8b8b8" textAnchor="middle">
        {[10, 20, 30, 40, 50, 60, 70, 80, 90].map(f => <text key={f} x={FX(f) - 0.5} y="646">{f}</text>)}
      </g>
      {ROWS.map(y => [30, 60, 90].map(f => <Diamond key={y + '-' + f} x={FX(f)} y={y} />))}
      {ROWS.map(y => <Diamond key={y} x={446} y={y} r={4.5} />)}
      <line x1="446" x2="446" y1="648" y2="755" stroke={BLUE} strokeWidth="1.6" />
      <rect x="434" y="633" width="24" height="17" rx="4" fill={BLUE} />
      <text x="446" y="645" fontFamily={UI} fontSize="10" fill="#f0f0f0" textAnchor="middle">0</text>
      <rect x="410" y="744" width="534" height="9" rx="4.5" fill="#555" />
      <circle cx="414" cy="748.5" r="3" fill="#303030" stroke="#666" />
      <circle cx="939" cy="748.5" r="3" fill="#303030" stroke="#666" />
      <rect x="946" y="640" width="4" height="105" rx="2" fill="#484848" />
    </Timeline>
  );
};

const stripTop = [['le'], ['n'], ['ec'], ['ti', '#7fb0e8'], ['e'], ['p'], ['av'], ['n']];

const ChannelValue = ({ children }) => (
  <ChRow $ml={13} $bg="#2f2f2f" $pl={3} $c="#c6c6c6">
    {children}<ChSpacer /><Icon n="wrench" s={13} c="#eee" /><Icon n="check" s={11} c="#ddd" /><Icon n="lock" s={14} c="#ccc" />
  </ChRow>
);

export default function App() {
  return (
    <Page>
      <Global />
      <SideStrip $bg="#303030">
        <StripText $h={21} />
        {stripTop.map(([t, c], i) => <StripText key={i} $c={c}>{t}</StripText>)}
        <StripText $h={358} />
        <StripText $h={22} $bg="#1c1c1c" />
        <StripText $h={30} />
        <StripText $h={16}>ia</StripText>
        <StripText $h={15} />
        <StripText $h={16}>s</StripText>
        <StripText $h={18}>os</StripText>
        <StripText $h={44} />
        <StripText $h={18}>ef</StripText>
      </SideStrip>

      <Window>
        <TitleBar>
          <Logo body="#e87d0d" dot="#265787" s={17} />
          <TitleText>Blender*  [G:\WorkFiles\Blender_ShapeKeys\TestingBlenderShapeKeys.blend]</TitleText>
          <WinBtn><Icon n="minus" s={13} c="#222" sw={.9} /></WinBtn>
          <WinBtn><Svg viewBox="0 0 16 16" $s={12} $c="#222" $sw={1.4}><rect x="1" y="1" width="14" height="14" /></Svg></WinBtn>
          <WinBtn><Svg viewBox="0 0 16 16" $s={13} $c="#222" $sw={1.1}><path d="M2 2l12 12M14 2L2 14" /></Svg></WinBtn>
        </TitleBar>

        <TopBar>
          <LogoCell><Logo s={17} /></LogoCell>
          <TopMenu><span>File</span><span>Edit</span><span>Render</span><span>Window</span><span>Help</span></TopMenu>
          <Tabs>
            {['Layout', 'Modeling', 'Sculpting', 'UV Editing', 'Texture Paint', 'Shading', 'Animation', 'Rendering', 'Compositing', 'Geometry Nodes', 'Sc'].map(t => (
              <Tab key={t} $on={t === 'UV Editing'}>{t}</Tab>
            ))}
          </Tabs>
          <IdBlock $w={192}>
            <IdIcon $w={31}><Icon n="scene" s={15} c="#ddd" /><Icon n="chev" s={9} c="#ddd" /></IdIcon>
            <IdName>Scene<Icon n="pin" s={14} c="#777" /></IdName>
            <IdBtn><Icon n="copy" s={14} /></IdBtn>
            <IdBtn $dim><Icon n="x" s={11} /></IdBtn>
          </IdBlock>
          <IdBlock $w={192} $ml={5}>
            <IdIcon $w={31}><Icon n="layers" s={15} c="#ddd" /><Icon n="chev" s={9} c="#ddd" /></IdIcon>
            <IdName>ViewLayer</IdName>
            <IdBtn><Icon n="copy" s={14} /></IdBtn>
            <IdBtn $dim><Icon n="x" s={11} /></IdBtn>
          </IdBlock>
        </TopBar>

        <Main>
          <LeftCol>
            <Viewport>
              <Scene />
              <HeaderLayer>
                <Row $pl={8} $pr={7}>
                  <Drop $w={28}><Icon n="view3d" s={15} /><Icon n="chev" s={9} /></Drop>
                  <Drop $w={109} $ml={8}>
                    <Icon n="editmode" s={14} />
                    <DropLabel $ml={8}>Edit Mode</DropLabel>
                    <Icon n="chev" s={9} />
                  </Drop>
                  <Seg $ml={7}>
                    <SegBtn $w={18} $on><Icon n="vert" s={14} /></SegBtn>
                    <SegBtn $w={18}><Icon n="edge" s={14} /></SegBtn>
                    <SegBtn $w={18}><Icon n="face" s={14} /></SegBtn>
                  </Seg>
                  <Menus $w={327} $ml={13}>
                    {['View', 'Select', 'Add', 'Mesh', 'Vertex', 'Edge', 'Face', 'UV'].map(m => <span key={m}>{m}</span>)}
                  </Menus>
                  <Drop $w={78}>
                    <Icon n="global" s={16} />
                    <DropLabel $ml={5}>Global</DropLabel>
                    <Icon n="chev" s={9} />
                  </Drop>
                  <Drop $w={31} $ml={6}><Icon n="pivot" s={15} /><Icon n="chev" s={9} /></Drop>
                  <Seg $ml={7}>
                    <SegBtn $w={18}><Icon n="magnet" s={14} /></SegBtn>
                    <SegBtn $w={29} $dark><Icon n="snapInc" s={14} /><Icon n="chev" s={9} /></SegBtn>
                  </Seg>
                  <Seg $ml={7}>
                    <SegBtn $w={18} $on><Icon n="prop" s={13} /></SegBtn>
                    <SegBtn $w={29} $dark><Icon n="falloff" s={14} /><Icon n="chev" s={9} /></SegBtn>
                  </Seg>
                  <Push />
                  <Drop $w={30}><Icon n="overlayEye" s={15} /><Icon n="chev" s={9} /></Drop>
                  <Seg $ml={7}>
                    <SegBtn $w={17} $on><Icon n="gizmoArrow" s={14} /></SegBtn>
                    <SegBtn $w={17} $dark><Icon n="chev" s={9} /></SegBtn>
                  </Seg>
                  <Seg $ml={8}>
                    <SegBtn $w={18} $on><Icon n="overlay" s={14} /></SegBtn>
                    <SegBtn $w={17} $dark><Icon n="chev" s={9} /></SegBtn>
                  </Seg>
                  <Seg $ml={7}><SegBtn $w={16}><Icon n="xray" s={14} /></SegBtn></Seg>
                  <Seg $ml={7}>
                    <SegBtn $w={18}><Icon n="wire" s={14} /></SegBtn>
                    <SegBtn $w={18} $on><Icon n="solid" s={14} /></SegBtn>
                    <SegBtn $w={18}><Icon n="matBall" s={14} /></SegBtn>
                    <SegBtn $w={18}><Icon n="rendBall" s={14} /></SegBtn>
                    <SegBtn $w={17} $dark><Icon n="chev" s={9} /></SegBtn>
                  </Seg>
                </Row>
                <Row $h={19} $mt={7} $pl={44} $pr={6}>
                  <Seg $h={19}>
                    <SegBtn $w={18} $on><Icon n="setNew" s={15} /></SegBtn>
                    <SegBtn $w={17}><Icon n="setAdd" s={14} /></SegBtn>
                    <SegBtn $w={17}><Icon n="setSub" s={14} /></SegBtn>
                    <SegBtn $w={18}><Icon n="setXor" s={14} /></SegBtn>
                    <SegBtn $w={17}><Icon n="setAnd" s={14} /></SegBtn>
                  </Seg>
                  <Push />
                  <Icon n="mirror" s={17} c="#cfcfcf" />
                  <Seg $h={19} $ml={3}>
                    <SegBtn $w={14}>X</SegBtn>
                    <SegBtn $w={15}>Y</SegBtn>
                    <SegBtn $w={14}>Z</SegBtn>
                  </Seg>
                  <Seg $h={19} $ml={8}><SegBtn $w={16}><Icon n="autoProp" s={14} c="#888" /></SegBtn></Seg>
                  <Drop $w={62} $ml={6} $pl={7}>Options<Icon n="chev" s={9} /></Drop>
                </Row>
              </HeaderLayer>
              <VBody>
                <ToolBar>
                  <ToolGroup $mb={9}>
                    <ToolItem n="select" on corner />
                    <ToolItem n="cursor" s={24} />
                  </ToolGroup>
                  <ToolGroup $mb={6}>
                    <ToolItem n="move" />
                    <ToolItem n="rotate" />
                    <ToolItem n="scale" corner />
                    <ToolItem n="transform" />
                  </ToolGroup>
                  <ToolGroup $mb={8}>
                    <ToolItem n="annotate" corner />
                    <ToolItem n="measure" />
                  </ToolGroup>
                  <ToolGroup $mb={6}>
                    <ToolItem n="addCube" corner />
                  </ToolGroup>
                  <ToolGroup $mb={0}>
                    <ToolItem n="extrude" corner />
                    <ToolItem n="inset" />
                    <ToolItem n="bevel" />
                    <ToolItem n="loopcut" corner />
                    <ToolItem n="loopcut" />
                  </ToolGroup>
                </ToolBar>
                <Info>User Perspective<br />(0) Sphere : Basis</Info>
                <NavCol>
                  <NavBtn><Icon n="zoomPlus" s={19} /></NavBtn>
                  <NavBtn><Icon n="hand" s={19} /></NavBtn>
                  <NavBtn><Icon n="camNav" s={19} /></NavBtn>
                  <NavBtn><Icon n="gridNav" s={19} /></NavBtn>
                </NavCol>
                <NPanel>
                  <PanelHead><Icon n="chev" s={10} c="#ccc" />Transform<PanelDots><Dots /></PanelDots></PanelHead>
                  <Lbl $mt={9}>Vertex:</Lbl>
                  <FieldStack $mt={3}>
                    <Field3 l="X" v="0.5 m" />
                    <Field3 l="Y" v="-0.5 m" />
                    <Field3 l="Z" v="-0.70711 m" />
                  </FieldStack>
                  <Toggle2><ToggleCell>Global</ToggleCell><ToggleCell $on>Local</ToggleCell></Toggle2>
                  <Lbl $mt={5}>Vertex Data:</Lbl>
                  <FieldStack $mt={5} $gap={3}>
                    <Field $r={3}><span>Bevel Weight</span><span>0.00</span></Field>
                    <Field $r={3}><span>Vertex Crease</span><span>0.00</span></Field>
                  </FieldStack>
                </NPanel>
                <SideTabs>
                  <SideTab $h={38} $on>Item</SideTab>
                  <SideTab $h={36}>Tool</SideTab>
                  <SideTab $h={38}>View</SideTab>
                </SideTabs>
              </VBody>
              <RedMode />
            </Viewport>

            <BottomRow>
              <Editor>
                <EditorHead $pl={8} $h={26}>
                  <Drop $w={28}><Icon n="uvEditor" s={15} /><Icon n="chev" s={9} /></Drop>
                  <Seg $ml={7}><SegBtn $w={18}><Icon n="sync" s={14} /></SegBtn></Seg>
                  <Seg $ml={6}>
                    <SegBtn $w={18} $on><Icon n="uvSel1" s={14} /></SegBtn>
                    <SegBtn $w={18}><Icon n="uvSel2" s={14} /></SegBtn>
                    <SegBtn $w={18}><Icon n="uvSel3" s={14} /></SegBtn>
                    <SegBtn $w={18}><Icon n="uvSel4" s={14} /></SegBtn>
                  </Seg>
                  <Drop $w={31} $ml={7}><Icon n="snapCube" s={14} /><Icon n="chev" s={9} /></Drop>
                </EditorHead>
                <Checker>
                  <UVPoints />
                  <UVBand />
                  <UVSeg>
                    <SegBtn $w={18} $on><Icon n="setNew" s={14} /></SegBtn>
                    <SegBtn $w={17}><Icon n="setAdd" s={14} /></SegBtn>
                    <SegBtn $w={17}><Icon n="setSub" s={14} /></SegBtn>
                  </UVSeg>
                  <ToolBar $top={34}>
                    <ToolGroup $mb={7}>
                      <ToolItem n="select" on corner />
                      <ToolItem n="cursor" s={24} />
                    </ToolGroup>
                    <ToolGroup $mb={0}><ToolItem n="move" /></ToolGroup>
                  </ToolBar>
                  <UVNav>
                    <UVNavBtn><Icon n="zoomPlus" s={19} /></UVNavBtn>
                    <UVNavBtn><Icon n="hand" s={19} /></UVNavBtn>
                  </UVNav>
                  <UVArrow><Icon n="chevR" s={10} /></UVArrow>
                </Checker>
              </Editor>

              <Editor $bg="#282828">
                <EditorHead $pl={9} $h={28}>
                  <Drop $w={30}><Icon n="ballTime" s={15} /><Icon n="chev" s={9} /></Drop>
                  <Seg $ml={5}>
                    <SegBtn $w={69} $dark>Playback<Icon n="chev" s={9} /></SegBtn>
                    <SegBtn $w={58} $dark>Keying<Icon n="chev" s={9} /></SegBtn>
                  </Seg>
                  <Menus $w={210} $ml={8}><span>View</span><span>Marker</span></Menus>
                  <Seg>
                    <SegBtn $w={18}><Icon n="tRec" s={14} /></SegBtn>
                    <SegBtn $w={18} $dark><Icon n="chev" s={8} c="#666" /></SegBtn>
                  </Seg>
                  <Seg $ml={6}>
                    <SegBtn $w={19}><Icon n="tStart" s={13} /></SegBtn>
                    <SegBtn $w={19}><Icon n="tPrevK" s={13} c="#999" /></SegBtn>
                    <SegBtn $w={18}><Icon n="tBack" s={14} /></SegBtn>
                    <SegBtn $w={19}><Icon n="tPlay" s={14} /></SegBtn>
                    <SegBtn $w={18}><Icon n="tNextK" s={13} c="#999" /></SegBtn>
                    <SegBtn $w={19}><Icon n="tEnd" s={13} /></SegBtn>
                  </Seg>
                  <Drop $w={73} $ml={136} $bg="#545454" $j="center" $pl={1}>0</Drop>
                  <Seg $ml={7}>
                    <SegBtn $w={17}><Icon n="clock" s={14} /></SegBtn>
                    <Split $w={86} $pl={14} $pr={9}><span>Start</span><span>1</span></Split>
                    <Split $w={83} $pl={16} $pr={6}><span>End</span><span>90</span></Split>
                  </Seg>
                </EditorHead>
                <SheetBody>
                  <Channels>
                    <ChSearch>
                      <ChInput><Icon n="search" s={13} /></ChInput>
                      <ChSwap><Icon n="swap" s={15} /></ChSwap>
                    </ChSearch>
                    <ChRow $bg="#4e2a2a" $pl={2}><Icon n="triD" s={13} c="#f0f0f0" /><ChDim>Summary</ChDim></ChRow>
                    <ChRow $bg="#1a4a78" $pl={2} $c="#f5a623"><Icon n="triD" s={13} c="#f0f0f0" /><Icon n="mesh" s={15} c="#aac" /> Sphere</ChRow>
                    <ChRow $ml={6} $bg="#0f2d4e" $pl={2} $c="#f5a623"><Icon n="triD" s={13} c="#f0f0f0" /><Icon n="shapeKey" s={15} c="#8aa" /> Key.001</ChRow>
                    <ChannelValue>Value (BlendShape_1)</ChannelValue>
                    <ChannelValue>Value (BlendShape_2)</ChannelValue>
                  </Channels>
                  <TimelineChart />
                  <ActionWrap>
                    <ActionPanel>
                      <ActionRow $h={26}><Icon n="chev" s={10} c="#ccc" />Action<PanelDots><Dots /></PanelDots></ActionRow>
                      <ActionRow $h={16} $mt={9} $gap={10}><Icon n="action" s={15} c="#ddd" />Key.001Action</ActionRow>
                      <ActionRow $h={16} $mt={9}><Box />Manual Frame Range</ActionRow>
                      <RangeGrp>
                        <RangeCell><span>Start</span><span>0</span></RangeCell>
                        <RangeCell><span>End</span><span>0</span></RangeCell>
                      </RangeGrp>
                      <ActionRow $h={16} $mt={3} $c="#7e7e7e"><Box $bg="#484848" />Cyclic Animation</ActionRow>
                    </ActionPanel>
                  </ActionWrap>
                </SheetBody>
              </Editor>
            </BottomRow>
          </LeftCol>

          <RightCol>
            <Outliner>
              <OutHead>
                <Drop $w={31}><Icon n="tree" s={15} /><Icon n="chev" s={9} /></Drop>
                <Drop $w={32} $ml={6}><Icon n="layers" s={15} /><Icon n="chev" s={9} /></Drop>
                <SearchBox $w={109} $ml={17}><Icon n="search" s={14} /></SearchBox>
                <Drop $w={30} $ml={17}><Icon n="filter" s={15} /></Drop>
              </OutHead>
              <OutRows>
                <OutRow $pl={19}><IconPad><Icon n="box" s={15} c="#ddd" /></IconPad><OutName $w={100}>Scene Collection</OutName></OutRow>
                <OutRow $pl={24} $alt>
                  <Tri><Icon n="triDn" s={10} /></Tri>
                  <IconPad $on><Icon n="box" s={14} c="#ddd" /></IconPad>
                  <OutName $w={60}>Collection</OutName>
                  <OutCols><Icon n="check" s={12} c="#eee" /><Icon n="eye" s={14} /><Icon n="render" s={14} /></OutCols>
                </OutRow>
                <OutRow $pl={44}>
                  <TreeLine />
                  <Tri><Icon n="triR" s={9} /></Tri>
                  <IconPad><Icon n="camOb" s={16} c={ORANGE} /></IconPad>
                  <OutName $w={65}>Camera1</OutName>
                  <IconPad><Icon n="camData" s={16} c={TEAL} /></IconPad>
                  <OutCols><Icon n="eye" s={14} /><Icon n="render" s={14} /></OutCols>
                </OutRow>
                <OutRow $pl={44} $alt>
                  <TreeLine />
                  <Tri><Icon n="triR" s={9} /></Tri>
                  <IconPad><Icon n="camOb" s={16} c={ORANGE} /></IconPad>
                  <OutName $w={65}>Camera2</OutName>
                  <IconPad $on><Icon n="camData" s={16} c={TEAL} /></IconPad>
                  <OutCols><Icon n="eye" s={14} /><Icon n="render" s={14} /></OutCols>
                </OutRow>
                <OutRow $pl={44}>
                  <TreeLine />
                  <Tri><Icon n="triR" s={9} /></Tri>
                  <IconPad><Icon n="lightOb" s={15} c={ORANGE} /></IconPad>
                  <OutName $w={44}>Light</OutName>
                  <IconPad><Icon n="lightData" s={14} c={TEAL} /></IconPad>
                  <OutCols><Icon n="eye" s={14} /><Icon n="render" s={14} /></OutCols>
                </OutRow>
              </OutRows>
              <ScrollThumb $t={35} $h={52} />
            </Outliner>

            <Props>
              <PropHead>
                <Drop $w={31}><Icon n="toggles" s={15} /><Icon n="chev" s={9} /></Drop>
                <SearchBox $w={110} $ml={27}><Icon n="search" s={14} /></SearchBox>
                <Push />
                <Drop $w={19} $j="center" $pl={1}><Icon n="chev" s={9} /></Drop>
              </PropHead>
              <PropBody>
                <PropTabs>
                  <PropTab><Icon n="tools" s={16} /></PropTab>
                  <PropTab $mt={11}><Icon n="render" s={15} /></PropTab>
                  <PropTab><Icon n="printer" s={15} /></PropTab>
                  <PropTab><Icon n="layers" s={15} /></PropTab>
                  <PropTab><Icon n="scene" s={15} /></PropTab>
                  <PropTab><Icon n="world" s={15} /></PropTab>
                  <PropTab $mt={8}><Icon n="boxLine" s={15} /></PropTab>
                  <PropTab $mt={8} $c={ORANGE}><Icon n="object" s={15} /></PropTab>
                  <PropTab $c="#6f9ad8"><Icon n="wrench" s={15} /></PropTab>
                  <PropTab $c="#6f9ad8"><Icon n="particles" s={15} /></PropTab>
                  <PropTab $c="#6f9ad8"><Icon n="physics" s={15} /></PropTab>
                  <PropTab $c="#6f9ad8"><Icon n="constraint" s={15} /></PropTab>
                  <PropTab $on $c="#22d3a4"><Icon n="mesh" s={15} /></PropTab>
                  <PropTab><Icon n="material" s={15} /></PropTab>
                </PropTabs>
                <PropMain>
                  <Crumbs>
                    <Icon n="object" s={15} c="#ddd" />
                    <CrumbText $ml={9}>Sphere</CrumbText>
                    <CrumbText $ml={13}><Icon n="chevR" s={11} c="#ccc" /></CrumbText>
                    <CrumbText $ml={9}><Icon n="mesh" s={16} c="#ddd" /></CrumbText>
                    <CrumbText $ml={5}>Sphere</CrumbText>
                    <Push />
                    <Icon n="pin" s={14} c="#888" />
                  </Crumbs>
                  <DataRow>
                    <DataIcon><Icon n="mesh" s={16} /><Icon n="chev" s={9} /></DataIcon>
                    <DataName>Sphere</DataName>
                    <DataShield><Icon n="shield" s={15} /></DataShield>
                  </DataRow>
                  <Panel $h={120} $mt={10}>
                    <PanelTitle><Icon n="chev" s={10} c="#bbb" />Vertex Groups<PanelDots><Dots /></PanelDots></PanelTitle>
                    <ListRow $mt={8}>
                      <ListBox $h={78}>
                        <ListFoot><Icon n="triR" s={8} /><Dots /></ListFoot>
                      </ListBox>
                      <SideBtns>
                        <SBGroup><SB><Icon n="plus" s={13} /></SB><SB $dim><Icon n="minus" s={13} /></SB></SBGroup>
                        <SB $dark $h={18} $r={3}><Icon n="chev" s={11} /></SB>
                      </SideBtns>
                    </ListRow>
                  </Panel>
                  <Panel $h={211}>
                    <PanelTitle><Icon n="chev" s={10} c="#bbb" />Shape Keys<PanelDots><Dots /></PanelDots></PanelTitle>
                    <RedDot />
                    <ListRow $mt={8}>
                      <ListBox $h={118}>
                        <ListItem $sel $c="#8b8b8b"><Icon n="shapeKey" s={15} c="#8a8a8a" /><ListName>Basis</ListName><Icon n="check" s={11} c="#9a9a9a" /></ListItem>
                        <ListItem><Icon n="shapeKey" s={15} c="#777" /><ListName>BlendSha…</ListName><ListVal>0.00</ListVal><Icon n="check" s={11} c="#8a8a8a" /></ListItem>
                        <ListItem><Icon n="shapeKey" s={15} c="#777" /><ListName>BlendSha…</ListName><ListVal>0.00</ListVal><Icon n="check" s={11} c="#8a8a8a" /></ListItem>
                        <ListFoot><Icon n="triR" s={8} /><Dots /></ListFoot>
                      </ListBox>
                      <SideBtns $gap={7}>
                        <SBGroup><SB $dim><Icon n="plus" s={13} /></SB><SB $dim><Icon n="minus" s={13} /></SB></SBGroup>
                        <SB $dark $h={18} $r={3}><Icon n="chev" s={11} /></SB>
                        <SBGroup><SB $dim><Icon n="triU" s={11} /></SB><SB $dim><Icon n="triDn" s={11} /></SB></SBGroup>
                      </SideBtns>
                    </ListRow>
                    <Disabled $mt={7}>
                      <CheckBtn $bg="#3f5578"><Icon n="checkMark" s={10} /></CheckBtn>Relative
                      <PinGrp><PinCell><Icon n="pin" s={13} /></PinCell><PinCell $on><Icon n="editmode" s={13} /></PinCell></PinGrp>
                      <SingleX><Icon n="x" s={11} /></SingleX>
                    </Disabled>
                    <Disabled $mt={7} $c="#c4c4c4">
                      <CheckBtn $ml={70} />Add Rest Po…
                      <PanelDots $mr={6}><Svg viewBox="0 0 8 8" $s={6}><circle className="f" cx="4" cy="4" r="3" /></Svg></PanelDots>
                    </Disabled>
                    <RedBox />
                  </Panel>
                  <Panel $h={100}>
                    <PanelTitle><Icon n="chev" s={10} c="#bbb" />UV Maps<PanelDots><Dots /></PanelDots></PanelTitle>
                    <ListRow $mt={7}>
                      <ListBox $h={58}>
                        <ListItem $sel $c="#e0e0e0"><Icon n="uvmap" s={15} c="#eee" /><ListName>UVMap</ListName><Icon n="render" s={14} c="#eee" /></ListItem>
                        <ListFoot><Icon n="triR" s={8} /><Dots /></ListFoot>
                      </ListBox>
                      <SideBtns>
                        <SBGroup><SB><Icon n="plus" s={13} /></SB><SB><Icon n="minus" s={13} /></SB></SBGroup>
                      </SideBtns>
                    </ListRow>
                  </Panel>
                  <Panel $h={24}>
                    <PanelTitle $h={24}><Icon n="chevR" s={10} c="#bbb" />Color Attributes<PanelDots><Dots /></PanelDots></PanelTitle>
                  </Panel>
                  <Panel $h={20} />
                </PropMain>
              </PropBody>
              <ScrollThumb $t={35} $h={398} />
            </Props>
          </RightCol>
        </Main>

        <Status>
          <StatusItem $w={211} $ml={9}><Icon n="mouseL" s={16} />&nbsp;Pick Shortest Path</StatusItem>
          <StatusItem $w={211}><Icon n="mouseM" s={16} />&nbsp;Dolly View</StatusItem>
          <StatusItem $w={300}><Icon n="mouseR" s={16} />&nbsp;Extrude to Cursor or Add</StatusItem>
          <Version>2.9.3</Version>
          <Watermark>CSDN @Jave.Lin</Watermark>
        </Status>
        <Under>
          <UnderCell $bg="#2f2f2f" $line="#1a1a1a" />
          <UnderCell $bg="#333" />
          <UnderCell $bg="#1f1f1f" />
          <UnderCell $bg="#363636" />
        </Under>
      </Window>
      <SideStrip $bg="#333333" />
    </Page>
  );
}
